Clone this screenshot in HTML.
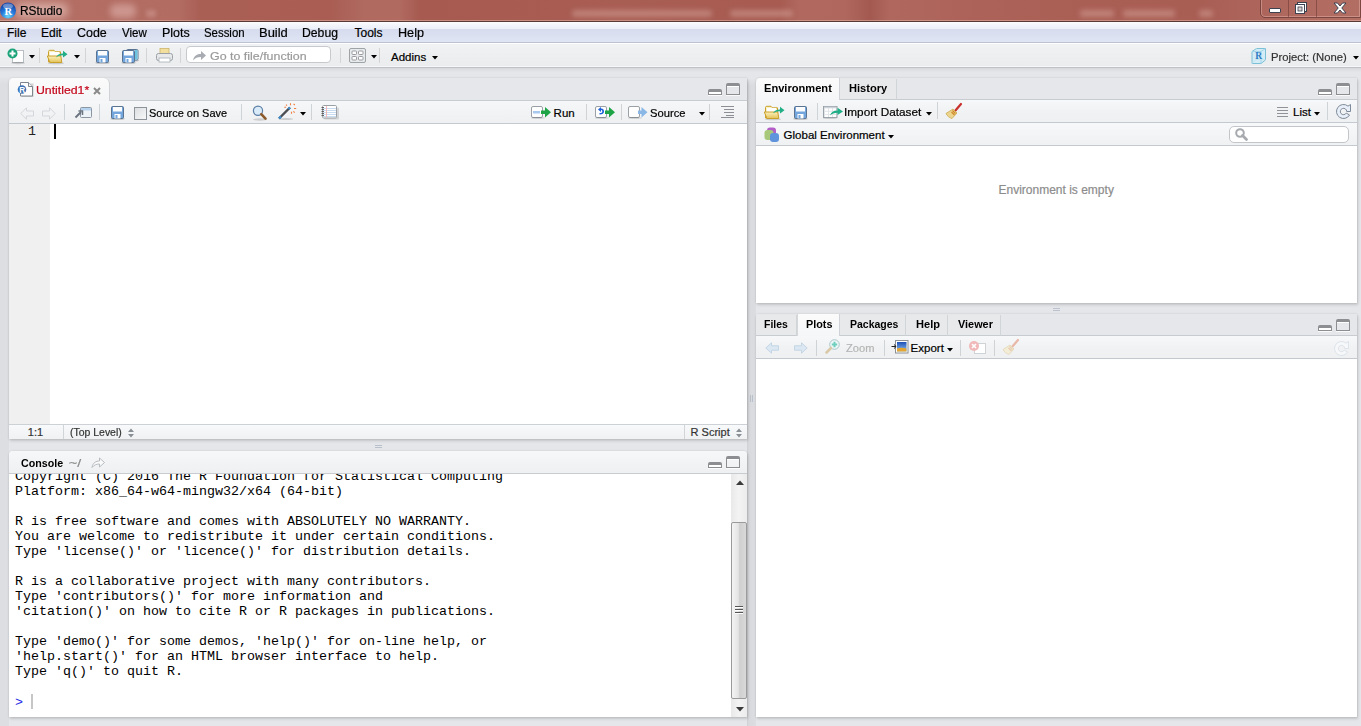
<!DOCTYPE html>
<html><head><meta charset="utf-8"><title>RStudio</title>
<style>
*{margin:0;padding:0;box-sizing:border-box}
html,body{width:1361px;height:726px;overflow:hidden;background:#e5e6e9;font-family:"Liberation Sans",sans-serif;position:relative}
.a{position:absolute}
svg.a{overflow:visible}
.t{position:absolute;white-space:pre;transform-origin:0 0}
.r{-webkit-text-stroke:0.2px currentColor}
</style></head><body>
<div class="a" style="left:0px;top:0px;width:1361px;height:22px;background:linear-gradient(90deg,#b8776d 0px,#b46e64 60px,#b26c62 180px,#aa5f55 200px,#a95d53 330px,#b06a60 365px,#b16a60 400px,#a65a50 420px,#a85c52 570px,#a95e54 620px,#a75b51 780px,#b1695f 800px,#b0685e 845px,#a35950 870px,#b0685e 890px,#ad6359 960px,#aa5f55 1080px,#a95e54 1200px,#b06a60 1300px,#b36e64 1361px)"></div>
<div class="a" style="left:0px;top:20px;width:1361px;height:1px;background:rgba(225,175,165,.6)"></div>
<div class="a" style="left:0px;top:21px;width:1361px;height:1px;background:#5a3a35"></div>
<div class="a" style="left:572px;top:10px;width:140px;height:7px;background:rgba(222,178,170,.42);filter:blur(2.5px);border-radius:3px"></div>
<div class="a" style="left:730px;top:10px;width:63px;height:7px;background:rgba(222,178,170,.42);filter:blur(2.5px);border-radius:3px"></div>
<div class="a" style="left:1080px;top:10px;width:34px;height:7px;background:rgba(222,178,170,.42);filter:blur(2.5px);border-radius:3px"></div>
<div class="a" style="left:1123px;top:10px;width:52px;height:7px;background:rgba(222,178,170,.42);filter:blur(2.5px);border-radius:3px"></div>
<div class="a" style="left:1199px;top:10px;width:14px;height:7px;background:rgba(222,178,170,.42);filter:blur(2.5px);border-radius:3px"></div>
<div class="a" style="left:110px;top:4px;width:26px;height:14px;background:rgba(235,200,195,.45);filter:blur(3px);border-radius:6px"></div>
<div class="a" style="left:146px;top:10px;width:10px;height:7px;background:rgba(235,200,195,.3);filter:blur(2px);border-radius:3px"></div>
<div class="a" style="left:16px;top:3px;width:52px;height:15px;background:rgba(240,215,210,.55);filter:blur(4px);border-radius:6px"></div>
<svg class="a" style="left:0px;top:1px" width="18" height="18" viewBox="0 0 18 18"><defs><radialGradient id="rg" cx="50%" cy="85%" r="75%"><stop offset="0" stop-color="#6fd8f8"/><stop offset=".55" stop-color="#2478dc"/><stop offset="1" stop-color="#1848a8"/></radialGradient></defs><circle cx="8" cy="9.5" r="8" fill="url(#rg)"/><ellipse cx="8" cy="5" rx="5" ry="2.5" fill="rgba(255,255,255,.35)"/><text x="8.3" y="13.6" font-family="Liberation Serif" font-weight="bold" font-size="10.5" fill="#fff" text-anchor="middle">R</text></svg>
<div class="a" style="left:1260px;top:-3px;width:101px;height:21px;border:1px solid rgba(80,40,36,.55);border-radius:0 0 0 5px;box-shadow:inset 0 0 0 1px rgba(255,210,200,.35)"></div>
<div class="a" style="left:1288px;top:0px;width:1px;height:17px;background:rgba(90,45,40,.45)"></div>
<div class="a" style="left:1316px;top:0px;width:1px;height:17px;background:rgba(90,45,40,.45)"></div>
<div class="a" style="left:1269px;top:8px;width:12px;height:5px;background:#fff;border:1px solid #3c4250;border-radius:1px"></div>
<svg class="a" style="left:1294px;top:1px" width="14" height="14" viewBox="0 0 14 14"><rect x="3.5" y="1.5" width="9" height="9" fill="#fff" stroke="#3c4250"/><rect x="1.5" y="3.5" width="9" height="9" fill="#fff" stroke="#3c4250"/><rect x="4" y="6" width="4" height="4" fill="#d9d2d0" stroke="#3c4250" stroke-width="0.8"/></svg>
<svg class="a" style="left:1333px;top:2px" width="14" height="12" viewBox="0 0 14 12"><path d="M1 1H4.5L7 4L9.5 1H13L8.8 6L13 11H9.5L7 8L4.5 11H1L5.2 6Z" fill="#fff" stroke="#3c4250" stroke-width="1" stroke-linejoin="round"/></svg>
<div class="a" style="left:0px;top:22px;width:1361px;height:20px;background:linear-gradient(#fdfdfe 0px,#f3f5fb 3px,#eceff8 6.9px,#d6dcee 7px,#dae0f0 13px,#dfe5f3 20px)"></div>
<div class="a" style="left:0px;top:42px;width:1361px;height:1px;background:#bcc2cf"></div>
<div class="a" style="left:0px;top:43px;width:1361px;height:24px;background:linear-gradient(#f1f2f3,#edeef0 60%,#ebeced)"></div>
<div class="a" style="left:0px;top:43px;width:1361px;height:1px;background:#fff"></div>
<div class="a" style="left:0px;top:66px;width:1361px;height:1px;background:#f6f7f8"></div>
<div class="a" style="left:0px;top:67px;width:1361px;height:1px;background:#bfc1c4"></div>
<div class="a" style="left:0px;top:68px;width:1361px;height:4px;background:linear-gradient(#d8d9dc,#e5e6e9)"></div>
<svg class="a" style="left:7px;top:48px" width="18" height="16" viewBox="0 0 18 16"><rect x="5.5" y="2.5" width="11" height="12" fill="#fff" stroke="#b9bec4"/><ellipse cx="11" cy="15" rx="7" ry="1.2" fill="rgba(0,0,0,.15)"/><circle cx="5.5" cy="5.5" r="5" fill="#1ba37a"/><path d="M5.5 2.5V8.5M2.5 5.5H8.5" stroke="#fff" stroke-width="2"/></svg>
<svg class="a" style="left:29px;top:55px" width="6" height="4" viewBox="0 0 6 4"><path d="M0 0H6L3 3.5Z" fill="#000"/></svg>
<div class="a" style="left:39px;top:48px;width:1px;height:15px;background:#d4d4d4"></div>
<svg class="a" style="left:46px;top:49px" width="22" height="15" viewBox="0 0 22 15"><defs><linearGradient id="fg" x1="0" y1="0" x2="0" y2="1"><stop offset="0" stop-color="#fdf2bd"/><stop offset="1" stop-color="#e3c158"/></linearGradient></defs><ellipse cx="10" cy="14.2" rx="8" ry="1" fill="rgba(0,0,0,.15)"/><path d="M2.5 13V2.5C2.5 1.8 3 1.3 3.7 1.3H8L9.5 2.8H14.5V13Z" fill="#fbf0c0" stroke="#c9a02a"/><rect x="4" y="3" width="9" height="4.5" fill="#fff"/><path d="M1.3 7H14.8L15.8 13.5H4Z" fill="url(#fg)" stroke="#c9a02a" stroke-linejoin="round"/><path d="M10 8.5C11 5.8 13.5 4.6 17 4.6V1.8L21.5 5.2L17 8.6V6.3C14 6.3 11.8 7 10 8.5Z" fill="#1fae86"/></svg>
<svg class="a" style="left:74px;top:55px" width="6" height="4" viewBox="0 0 6 4"><path d="M0 0H6L3 3.5Z" fill="#000"/></svg>
<div class="a" style="left:85px;top:48px;width:1px;height:15px;background:#d4d4d4"></div>
<svg class="a" style="left:96px;top:50px" width="13" height="13" viewBox="0 0 13 13"><ellipse cx="6.5" cy="12.8" rx="7.5" ry="1.2" fill="rgba(0,0,0,.18)"/><rect x="0.5" y="0.5" width="12" height="12" rx="1.2" fill="#72a6dc" stroke="#5a7391"/><rect x="2" y="1" width="9" height="4.5" fill="#fbfcfd"/><rect x="3.5" y="8" width="6" height="4.5" fill="#fff"/><rect x="4.5" y="9" width="2" height="3.5" fill="#72a6dc"/></svg>
<svg class="a" style="left:122px;top:49px" width="17" height="14" viewBox="0 0 17 14"><ellipse cx="12" cy="11.5" rx="5" ry="1" fill="rgba(0,0,0,.18)"/><rect x="4.5" y="0.5" width="11.5" height="10.5" rx="1.2" fill="#fff" stroke="#5a7391"/><rect x="12.5" y="1" width="3" height="9.5" fill="#6cc4e0"/><g transform="translate(0,1)"><ellipse cx="6.5" cy="12.8" rx="7.5" ry="1.2" fill="rgba(0,0,0,.18)"/><rect x="0.5" y="0.5" width="12" height="12" rx="1.2" fill="#72a6dc" stroke="#5a7391"/><rect x="2" y="1" width="9" height="4.5" fill="#fbfcfd"/><rect x="3.5" y="8" width="6" height="4.5" fill="#fff"/><rect x="4.5" y="9" width="2" height="3.5" fill="#72a6dc"/></g></svg>
<div class="a" style="left:146px;top:48px;width:1px;height:15px;background:#d4d4d4"></div>
<svg class="a" style="left:156px;top:48px" width="17" height="15" viewBox="0 0 17 15"><rect x="4" y="0.5" width="9" height="6" fill="#f2df9e" stroke="#cdb46a" stroke-width=".8"/><rect x="0.5" y="5.5" width="16" height="7" rx="2" fill="#e6e8ea" stroke="#9aa0a6"/><rect x="3" y="10" width="11" height="4" fill="#fff" stroke="#a8aeb4" stroke-width=".8"/></svg>
<div class="a" style="left:180px;top:48px;width:1px;height:15px;background:#d4d4d4"></div>
<div class="a" style="left:186px;top:46px;width:145px;height:17px;background:#fff;border:1px solid #c7c9cc;border-radius:4px"></div>
<svg class="a" style="left:192px;top:50px" width="15" height="11" viewBox="0 0 15 11"><path d="M1 10.5C2 5.5 5 4 9 4V1L14 5.5L9 10V7C5.5 7 3 8 1 10.5Z" fill="#a8acb2"/></svg>
<div class="a" style="left:340px;top:48px;width:1px;height:15px;background:#d4d4d4"></div>
<svg class="a" style="left:349px;top:48px" width="17" height="15" viewBox="0 0 17 15"><rect x="0.5" y="0.5" width="16" height="14" rx="1.5" fill="#e9eaec" stroke="#9ea3a8"/><rect x="3" y="3" width="4.5" height="3.5" rx=".8" fill="#fff" stroke="#8d9297" stroke-width=".9"/><rect x="9.5" y="3" width="4.5" height="3.5" rx=".8" fill="#fff" stroke="#8d9297" stroke-width=".9"/><rect x="3" y="8.5" width="4.5" height="3.5" rx=".8" fill="#fff" stroke="#8d9297" stroke-width=".9"/><rect x="9.5" y="8.5" width="4.5" height="3.5" rx=".8" fill="#fff" stroke="#8d9297" stroke-width=".9"/></svg>
<svg class="a" style="left:371px;top:55px" width="6" height="4" viewBox="0 0 6 4"><path d="M0 0H6L3 3.5Z" fill="#000"/></svg>
<div class="a" style="left:379px;top:48px;width:1px;height:15px;background:#d4d4d4"></div>
<svg class="a" style="left:432px;top:56px" width="6" height="4" viewBox="0 0 6 4"><path d="M0 0H6L3 3.5Z" fill="#000"/></svg>
<svg class="a" style="left:1250px;top:47px" width="17" height="18" viewBox="0 0 17 18"><path d="M2 4.5L6.5 1.5H15.5V13L11 16.5H2Z" fill="#d4ecf6" stroke="#7cc0d8" stroke-linejoin="round"/><path d="M2 4.5H11V16.5M11 4.5L15.5 1.5" fill="none" stroke="#9fd3e6" stroke-width=".9"/><path d="M2 16.5L6.5 12.5H15.5M6.5 1.5V12.5" fill="none" stroke="#bfe2ee" stroke-width=".7"/><text x="8.6" y="12" font-family="Liberation Serif" font-weight="bold" font-size="9.5" fill="#2f7cc4" text-anchor="middle">R</text></svg>
<svg class="a" style="left:1353px;top:56px" width="6" height="4" viewBox="0 0 6 4"><path d="M0 0H6L3 3.5Z" fill="#000"/></svg>
<div class="a" style="left:0px;top:76px;width:9px;height:650px;background:linear-gradient(#e5e6e9,#dddee1 8px,#dddee1)"></div>
<div class="a" style="left:747px;top:78px;width:9px;height:648px;background:linear-gradient(90deg,#cfd0d3 0,#d9dadd 2px,#dcdde0 100%)"></div>
<div class="a" style="left:747px;top:78px;width:9px;height:8px;background:linear-gradient(#e5e6e9,rgba(229,230,233,0))"></div>
<div class="a" style="left:750px;top:395px;width:1px;height:7px;background:#b8c0cc"></div>
<div class="a" style="left:752px;top:395px;width:1px;height:7px;background:#b8c0cc"></div>
<div class="a" style="left:9px;top:78px;width:738px;height:361px;background:#fff;border-radius:4px 0 0 0;box-shadow:0 0 2px rgba(0,0,0,.16),1px 2px 3px rgba(0,0,0,.14)"></div>
<div class="a" style="left:9px;top:78px;width:738px;height:22px;background:#e6e7ea;border-radius:4px 0 0 0"></div>
<div class="a" style="left:9px;top:100px;width:738px;height:1px;background:#c8ccd0"></div>
<div class="a" style="left:9px;top:78px;width:101px;height:23px;background:linear-gradient(#fbfbfc,#f4f5f6);border-radius:5px 6px 0 0;border-right:1px solid #cfd2d6"></div>
<div class="a" style="left:9px;top:101px;width:738px;height:22px;background:linear-gradient(#f6f7f8,#f2f3f4 50%,#eef0f1)"></div>
<div class="a" style="left:9px;top:123px;width:738px;height:1px;background:#c3c9ce"></div>
<div class="a" style="left:9px;top:124px;width:41px;height:300px;background:#f0f0f0"></div>
<div class="a" style="left:54px;top:124px;width:2px;height:15px;background:#000"></div>
<div class="a" style="left:9px;top:424px;width:738px;height:1px;background:#cdd1d5"></div>
<div class="a" style="left:9px;top:425px;width:738px;height:14px;background:linear-gradient(#f8f9fa,#eff1f2)"></div>
<div class="a" style="left:63px;top:425px;width:1px;height:14px;background:#d2d5d8"></div>
<div class="a" style="left:684px;top:425px;width:1px;height:14px;background:#d2d5d8"></div>
<svg class="a" style="left:128px;top:428px" width="6" height="10" viewBox="0 0 6 10"><path d="M0 4L3 0.5L6 4Z M0 6L3 9.5L6 6Z" fill="#8a8f95"/></svg>
<svg class="a" style="left:736px;top:428px" width="6" height="10" viewBox="0 0 6 10"><path d="M0 4L3 0.5L6 4Z M0 6L3 9.5L6 6Z" fill="#8a8f95"/></svg>
<div class="a" style="left:708px;top:89px;width:14px;height:6px;border:1px solid #8c8e91;border-top:3px solid #8c8e91;background:#fff;border-radius:2px 2px 0 0"></div><div class="a" style="left:708px;top:95px;width:14px;height:1px;background:rgba(255,255,255,.8)"></div><div class="a" style="left:726px;top:83px;width:14px;height:12px;border:1px solid #8c8e91;border-top:3px solid #8c8e91;border-radius:2px 2px 0 0;box-shadow:inset 0 1px 0 #fff"></div><div class="a" style="left:726px;top:95px;width:14px;height:1px;background:rgba(255,255,255,.8)"></div>
<svg class="a" style="left:17px;top:82px" width="17" height="15" viewBox="0 0 17 15"><rect x="4.5" y="1.5" width="12" height="13.5" fill="rgba(0,0,0,.15)"/><path d="M3.5 0.5H11.5L15.5 4.5V14H3.5Z" fill="#fff" stroke="#7e858c"/><path d="M11.5 0.5V4.5H15.5" fill="#f2f2f2" stroke="#7e858c"/><circle cx="5" cy="7.5" r="4.3" fill="#3d72b4"/><text x="5.1" y="10.6" font-family="Liberation Sans" font-weight="bold" font-size="8.2" fill="#fff" text-anchor="middle">R</text></svg>
<svg class="a" style="left:93px;top:87px" width="8" height="8" viewBox="0 0 8 8"><path d="M1 1L7 7M7 1L1 7" stroke="#8a8a8a" stroke-width="2"/></svg>
<svg class="a" style="left:20px;top:107px" width="14" height="13" viewBox="0 0 14 13"><path d="M0.8 6.5L6.5 0.8V4H13.5V9H6.5V12.2Z" fill="none" stroke="#d3d6da"/></svg>
<svg class="a" style="left:42px;top:107px" width="14" height="13" viewBox="0 0 14 13"><path d="M13.2 6.5L7.5 0.8V4H0.5V9H7.5V12.2Z" fill="none" stroke="#d3d6da"/></svg>
<div class="a" style="left:64px;top:104px;width:1px;height:16px;background:#d0d3d6"></div>
<svg class="a" style="left:74px;top:105px" width="19" height="14" viewBox="0 0 19 14"><rect x="6.5" y="2.5" width="11" height="10" rx="1" fill="#eef3f8" stroke="#8b96a2"/><rect x="7" y="3" width="10" height="2.5" fill="#b6d3ef"/><path d="M1.5 12.5L7 7" stroke="#6b7480" stroke-width="2"/><path d="M4.5 6H8.5V10" stroke="#6b7480" stroke-width="1.5" fill="none"/></svg>
<div class="a" style="left:99px;top:104px;width:1px;height:16px;background:#d0d3d6"></div>
<svg class="a" style="left:111px;top:106px" width="13" height="13" viewBox="0 0 13 13"><ellipse cx="6.5" cy="12.8" rx="7.5" ry="1.2" fill="rgba(0,0,0,.18)"/><rect x="0.5" y="0.5" width="12" height="12" rx="1.2" fill="#72a6dc" stroke="#5a7391"/><rect x="2" y="1" width="9" height="4.5" fill="#fbfcfd"/><rect x="3.5" y="8" width="6" height="4.5" fill="#fff"/><rect x="4.5" y="9" width="2" height="3.5" fill="#72a6dc"/></svg>
<div class="a" style="left:134px;top:107px;width:13px;height:13px;border:1px solid #8e9399;background:linear-gradient(135deg,#dcdee0,#f8f8f8)"></div>
<div class="a" style="left:241px;top:104px;width:1px;height:16px;background:#d0d3d6"></div>
<svg class="a" style="left:251px;top:104px" width="17" height="17" viewBox="0 0 17 17"><ellipse cx="9" cy="15.5" rx="7" ry="1.2" fill="rgba(0,0,0,.15)"/><circle cx="7" cy="6.7" r="4.6" fill="#d9eaf8" stroke="#5b7ea5" stroke-width="1.2"/><path d="M10.3 10.2L14.5 14.6" stroke="#8b5a2b" stroke-width="2.6" stroke-linecap="round"/></svg>
<svg class="a" style="left:276px;top:103px" width="22" height="17" viewBox="0 0 22 17"><ellipse cx="10" cy="16" rx="7" ry="1" fill="rgba(0,0,0,.15)"/><path d="M3 15.5L14 4.5" stroke="#4a4d52" stroke-width="2.4"/><path d="M3 15.5L5 13.5M12.5 6L14 4.5" stroke="#3d8fd0" stroke-width="2.4"/><path d="M10 1.6L11 2.6M14.5 0.3V2.3M17.6 0.8L18.8 2M8.3 4.2H10.1M18 5.5H20.2M15.5 8.8V10.8M17.4 8.4L18.6 9.6" stroke="#f47c3c" stroke-width="1.1"/></svg>
<svg class="a" style="left:300px;top:112px" width="6" height="4" viewBox="0 0 6 4"><path d="M0 0H6L3 3.5Z" fill="#000"/></svg>
<div class="a" style="left:311px;top:104px;width:1px;height:16px;background:#d0d3d6"></div>
<svg class="a" style="left:321px;top:105px" width="19" height="15" viewBox="0 0 19 15"><rect x="3" y="2.5" width="15" height="12" rx="1" fill="rgba(0,0,0,.12)"/><rect x="1.5" y="0.5" width="14" height="12.5" rx="1.2" fill="#fff" stroke="#9aa0a6"/><path d="M2 3.5H15M2 5.5H15M2 7.5H15M2 9.5H15M2 11.5H15" stroke="#b9d2ee" stroke-width=".8"/><path d="M5.5 1V12.5" stroke="#f2a8a8" stroke-width=".8"/><path d="M0.5 2.5H3M0.5 4.5H3M0.5 6.5H3M0.5 8.5H3M0.5 10.5H3" stroke="#555" stroke-width=".9"/></svg>
<svg class="a" style="left:531px;top:105px" width="21" height="15" viewBox="0 0 21 15"><rect x="0.5" y="1.5" width="11" height="11" rx="1.5" fill="#fff" stroke="#9aa0a6"/><ellipse cx="7" cy="13" rx="7" ry="1" fill="rgba(0,0,0,.12)"/><rect x="2" y="6" width="7" height="2.5" fill="#a8c8ee"/><path d="M10 5.5H14V2L20 7.2L14 12.5V9H10Z" fill="#1ea446"/></svg>
<div class="a" style="left:586px;top:104px;width:1px;height:16px;background:#d0d3d6"></div>
<svg class="a" style="left:595px;top:105px" width="21" height="15" viewBox="0 0 21 15"><rect x="0.5" y="1.5" width="11" height="11" rx="1.5" fill="#fff" stroke="#9aa0a6"/><ellipse cx="7" cy="13" rx="7" ry="1" fill="rgba(0,0,0,.12)"/><path d="M3 4.5L6 2V3.5C8.5 3.5 9 5 9 6.5C9 8.5 7.5 9.5 4.5 9.5V8C6.5 8 7.3 7.5 7.3 6.5C7.3 5.5 6.8 5 6 5V7Z" fill="#1d60d8"/><path d="M10 5.5H14V2L20 7.2L14 12.5V9H10Z" fill="#1ea446"/></svg>
<div class="a" style="left:621px;top:104px;width:1px;height:16px;background:#d0d3d6"></div>
<svg class="a" style="left:628px;top:105px" width="20" height="15" viewBox="0 0 20 15"><rect x="0.5" y="1.5" width="11" height="11" rx="1.5" fill="#fff" stroke="#9aa0a6"/><ellipse cx="7" cy="13" rx="7" ry="1" fill="rgba(0,0,0,.12)"/><path d="M10 5.5H13.5V2L19.5 7.2L13.5 12.5V9H10Z" fill="#8ab8e6"/></svg>
<svg class="a" style="left:699px;top:112px" width="6" height="4" viewBox="0 0 6 4"><path d="M0 0H6L3 3.5Z" fill="#000"/></svg>
<div class="a" style="left:709px;top:104px;width:1px;height:16px;background:#d0d3d6"></div>
<svg class="a" style="left:721px;top:106px" width="13" height="12" viewBox="0 0 13 12"><path d="M0 0.5H13M3 3.5H13M3 6.5H13M5 9.5H13M0 11.5H13" stroke="#8c9096" stroke-width="1"/></svg>
<div class="a" style="left:9px;top:451px;width:738px;height:266px;background:#fff;border-radius:4px 4px 0 0;box-shadow:0 0 2px rgba(0,0,0,.16),1px 2px 3px rgba(0,0,0,.14)"></div>
<div class="a" style="left:9px;top:451px;width:738px;height:22px;background:linear-gradient(#f6f7f8,#eef0f1);border-radius:4px 4px 0 0"></div>
<div class="a" style="left:9px;top:473px;width:738px;height:1px;background:#c8ccd0"></div>
<svg class="a" style="left:91px;top:457px" width="14" height="11" viewBox="0 0 14 11"><path d="M1 10.5C2 5.5 5 4 8.5 4V1L13.5 5.5L8.5 10V7C5.5 7 3 8 1 10.5Z" fill="#fafafa" stroke="#b8bcc0"/></svg>
<div class="a" style="left:708px;top:462px;width:14px;height:6px;border:1px solid #8c8e91;border-top:3px solid #8c8e91;background:#fff;border-radius:2px 2px 0 0"></div><div class="a" style="left:708px;top:468px;width:14px;height:1px;background:rgba(255,255,255,.8)"></div><div class="a" style="left:726px;top:456px;width:14px;height:12px;border:1px solid #8c8e91;border-top:3px solid #8c8e91;border-radius:2px 2px 0 0;box-shadow:inset 0 1px 0 #fff"></div><div class="a" style="left:726px;top:468px;width:14px;height:1px;background:rgba(255,255,255,.8)"></div>
<div class="a" style="left:731px;top:474px;width:16px;height:243px;background:linear-gradient(90deg,#e9e9e9,#f3f3f3 50%,#ececec)"></div>
<svg class="a" style="left:736px;top:480px" width="8" height="5" viewBox="0 0 8 5"><path d="M0 5L4 0.5L8 5Z" fill="#3a3a3a"/></svg>
<svg class="a" style="left:736px;top:707px" width="8" height="5" viewBox="0 0 8 5"><path d="M0 0L4 4.5L8 0Z" fill="#3a3a3a"/></svg>
<div class="a" style="left:731px;top:522px;width:16px;height:177px;border:1px solid #9a9a9a;border-radius:2px;background:linear-gradient(90deg,#f4f4f4,#e4e4e4 45%,#cfcfcf 55%,#dadada)"></div>
<svg class="a" style="left:735px;top:606px" width="8" height="9" viewBox="0 0 8 9"><path d="M0 0.5H8M0 3.5H8M0 6.5H8" stroke="#555" stroke-width="1"/><path d="M0 1.5H8M0 4.5H8M0 7.5H8" stroke="#fff" stroke-width="1"/></svg>
<div class="a" style="left:756px;top:78px;width:601px;height:225px;background:#fff;border-radius:3px 0 0 0;box-shadow:0 0 2px rgba(0,0,0,.16),1px 2px 3px rgba(0,0,0,.14)"></div>
<div class="a" style="left:756px;top:78px;width:601px;height:21px;background:#e6e7ea;border-radius:3px 0 0 0"></div>
<div class="a" style="left:756px;top:99px;width:601px;height:1px;background:#c8ccd0"></div>
<div class="a" style="left:756px;top:78px;width:84px;height:22px;background:linear-gradient(#fbfbfc,#f5f6f7);border-radius:5px 0 0 0;border-right:1px solid #cfd2d6"></div>
<div class="a" style="left:840px;top:79px;width:57px;height:21px;background:#e8e9eb;border-right:1px solid #d2d5d8;border-bottom:1px solid #c8ccd0"></div>
<div class="a" style="left:756px;top:100px;width:601px;height:22px;background:linear-gradient(#f7f8f9,#f1f2f3 50%,#eef0f1)"></div>
<div class="a" style="left:756px;top:122px;width:601px;height:1px;background:#c3c9ce"></div>
<div class="a" style="left:756px;top:123px;width:601px;height:22px;background:linear-gradient(#f7f8f9,#eff1f2)"></div>
<div class="a" style="left:756px;top:145px;width:601px;height:1px;background:#c3c9ce"></div>
<div class="a" style="left:1318px;top:89px;width:14px;height:6px;border:1px solid #8c8e91;border-top:3px solid #8c8e91;background:#fff;border-radius:2px 2px 0 0"></div><div class="a" style="left:1318px;top:95px;width:14px;height:1px;background:rgba(255,255,255,.8)"></div><div class="a" style="left:1336px;top:83px;width:14px;height:12px;border:1px solid #8c8e91;border-top:3px solid #8c8e91;border-radius:2px 2px 0 0;box-shadow:inset 0 1px 0 #fff"></div><div class="a" style="left:1336px;top:95px;width:14px;height:1px;background:rgba(255,255,255,.8)"></div>
<svg class="a" style="left:763px;top:105px" width="22" height="15" viewBox="0 0 22 15"><defs><linearGradient id="fg2" x1="0" y1="0" x2="0" y2="1"><stop offset="0" stop-color="#fdf2bd"/><stop offset="1" stop-color="#e3c158"/></linearGradient></defs><ellipse cx="10" cy="14.2" rx="8" ry="1" fill="rgba(0,0,0,.15)"/><path d="M2.5 13V2.5C2.5 1.8 3 1.3 3.7 1.3H8L9.5 2.8H14.5V13Z" fill="#fbf0c0" stroke="#c9a02a"/><rect x="4" y="3" width="9" height="4.5" fill="#fff"/><path d="M1.3 7H14.8L15.8 13.5H4Z" fill="url(#fg2)" stroke="#c9a02a" stroke-linejoin="round"/><path d="M10 8.5C11 5.8 13.5 4.6 17 4.6V1.8L21.5 5.2L17 8.6V6.3C14 6.3 11.8 7 10 8.5Z" fill="#1fae86"/></svg>
<svg class="a" style="left:794px;top:106px" width="13" height="13" viewBox="0 0 13 13"><ellipse cx="6.5" cy="12.8" rx="7.5" ry="1.2" fill="rgba(0,0,0,.18)"/><rect x="0.5" y="0.5" width="12" height="12" rx="1.2" fill="#72a6dc" stroke="#5a7391"/><rect x="2" y="1" width="9" height="4.5" fill="#fbfcfd"/><rect x="3.5" y="8" width="6" height="4.5" fill="#fff"/><rect x="4.5" y="9" width="2" height="3.5" fill="#72a6dc"/></svg>
<div class="a" style="left:817px;top:103px;width:1px;height:17px;background:#d0d3d6"></div>
<svg class="a" style="left:822px;top:104px" width="22" height="16" viewBox="0 0 22 16"><ellipse cx="8" cy="14" rx="7" ry="1" fill="rgba(0,0,0,.15)"/><rect x="1.5" y="2.5" width="13.5" height="11" fill="#e2e5e8" stroke="#9aa2aa"/><path d="M2 3H14.5" stroke="#b8c0c8" stroke-width="1"/><g fill="#fff"><rect x="3" y="4.5" width="3" height="2.3"/><rect x="7" y="4.5" width="3" height="2.3"/><rect x="11" y="4.5" width="3" height="2.3"/><rect x="3" y="7.8" width="3" height="2.3"/><rect x="7" y="7.8" width="3" height="2.3"/><rect x="11" y="7.8" width="3" height="2.3"/><rect x="3" y="11" width="3" height="2"/><rect x="7" y="11" width="3" height="2"/><rect x="11" y="11" width="3" height="2"/></g><path d="M8 11.5C9 8.5 11.5 6.6 15.5 6.6V3.8L21 7.4L15.5 11V8.7C12.5 8.7 10 9.6 8 11.5Z" fill="#1fae86"/></svg>
<svg class="a" style="left:926px;top:112px" width="6" height="4" viewBox="0 0 6 4"><path d="M0 0H6L3 3.5Z" fill="#000"/></svg>
<div class="a" style="left:937px;top:102px;width:1px;height:17px;background:#d0d3d6"></div>
<svg class="a" style="left:945px;top:103px" width="18" height="17" viewBox="0 0 18 17"><path d="M16 1L10 8" stroke="#c9302c" stroke-width="2.2" stroke-linecap="round"/><path d="M8 6L12 10L7 15.5C5 15 2 13 1 10.5Z" fill="#ecd58e" stroke="#caa84e" stroke-width=".8"/><path d="M7.5 7.5L10.5 10.5M6.5 9L9.5 12" stroke="#d18a2a" stroke-width="1.2"/></svg>
<svg class="a" style="left:1277px;top:107px" width="11" height="11" viewBox="0 0 11 11"><path d="M0 0.5H11M0 3.5H11M0 6.5H11M0 9.5H11" stroke="#8f9398" stroke-width="1"/></svg>
<svg class="a" style="left:1314px;top:112px" width="6" height="4" viewBox="0 0 6 4"><path d="M0 0H6L3 3.5Z" fill="#000"/></svg>
<div class="a" style="left:1327px;top:102px;width:1px;height:18px;background:#d0d3d6"></div>
<svg class="a" style="left:1336px;top:104px" width="16" height="16" viewBox="0 0 16 16"><path d="M13.56 11A7 7 0 1 1 12 2.14L14.5 0.5V7.5H10.7A3.2 3.2 0 1 0 10.27 9.1Z" fill="#e8eff8" stroke="#7d8a99" stroke-width="1" stroke-linejoin="round"/></svg>
<svg class="a" style="left:764px;top:127px" width="16" height="15" viewBox="0 0 16 15"><rect x="3" y="0.5" width="9" height="9" rx="3" fill="#b35dc8"/><rect x="0.5" y="3" width="9" height="10" rx="3" fill="#a9c97a"/><rect x="6" y="6" width="9" height="9" rx="3" fill="#5f94dc"/></svg>
<svg class="a" style="left:888px;top:135px" width="6" height="4" viewBox="0 0 6 4"><path d="M0 0H6L3 3.5Z" fill="#000"/></svg>
<div class="a" style="left:1229px;top:126px;width:120px;height:17px;background:#fff;border:1px solid #c3c6c9;border-radius:5px"></div>
<svg class="a" style="left:1235px;top:128px" width="13" height="13" viewBox="0 0 13 13"><circle cx="5" cy="5" r="3.8" fill="none" stroke="#a6aaae" stroke-width="2"/><path d="M7.5 7.5L11.5 11.5" stroke="#a6aaae" stroke-width="2.8" stroke-linecap="round"/></svg>
<div class="a" style="left:1053px;top:308px;width:7px;height:1px;background:#bcc3ce"></div>
<div class="a" style="left:1053px;top:310px;width:7px;height:1px;background:#bcc3ce"></div>
<div class="a" style="left:756px;top:314px;width:601px;height:403px;background:#fff;border-radius:3px 0 0 0;box-shadow:0 0 2px rgba(0,0,0,.16),1px 2px 3px rgba(0,0,0,.14)"></div>
<div class="a" style="left:756px;top:314px;width:601px;height:21px;background:#e6e7ea;border-radius:3px 0 0 0"></div>
<div class="a" style="left:756px;top:335px;width:601px;height:1px;background:#c8ccd0"></div>
<div class="a" style="left:756px;top:315px;width:41px;height:21px;background:#e8e9eb;border-right:1px solid #d2d5d8;border-bottom:1px solid #c8ccd0;border-radius:4px 0 0 0"></div>
<div class="a" style="left:797px;top:314px;width:43px;height:22px;background:linear-gradient(#fbfbfc,#f5f6f7);border-right:1px solid #cfd2d6;border-left:1px solid #d5d8db"></div>
<div class="a" style="left:840px;top:315px;width:66px;height:21px;background:#e8e9eb;border-right:1px solid #d2d5d8;border-bottom:1px solid #c8ccd0"></div>
<div class="a" style="left:906px;top:315px;width:42px;height:21px;background:#e8e9eb;border-right:1px solid #d2d5d8;border-bottom:1px solid #c8ccd0"></div>
<div class="a" style="left:948px;top:315px;width:53px;height:21px;background:#e8e9eb;border-right:1px solid #d2d5d8;border-bottom:1px solid #c8ccd0"></div>
<div class="a" style="left:756px;top:336px;width:601px;height:22px;background:linear-gradient(#f7f8f9,#f1f2f3 50%,#eef0f1)"></div>
<div class="a" style="left:756px;top:358px;width:601px;height:1px;background:#c3c9ce"></div>
<div class="a" style="left:1318px;top:325px;width:14px;height:6px;border:1px solid #8c8e91;border-top:3px solid #8c8e91;background:#fff;border-radius:2px 2px 0 0"></div><div class="a" style="left:1318px;top:331px;width:14px;height:1px;background:rgba(255,255,255,.8)"></div><div class="a" style="left:1336px;top:319px;width:14px;height:12px;border:1px solid #8c8e91;border-top:3px solid #8c8e91;border-radius:2px 2px 0 0;box-shadow:inset 0 1px 0 #fff"></div><div class="a" style="left:1336px;top:331px;width:14px;height:1px;background:rgba(255,255,255,.8)"></div>
<svg class="a" style="left:765px;top:342px" width="14" height="12" viewBox="0 0 14 12"><path d="M0.8 6L6.5 0.8V3.8H13.5V8.2H6.5V11.2Z" fill="#dbe8f3" stroke="#c4d5e4"/></svg>
<svg class="a" style="left:794px;top:342px" width="14" height="12" viewBox="0 0 14 12"><path d="M13.2 6L7.5 0.8V3.8H0.5V8.2H7.5V11.2Z" fill="#dbe8f3" stroke="#c4d5e4"/></svg>
<div class="a" style="left:816px;top:340px;width:1px;height:16px;background:#d0d3d6"></div>
<svg class="a" style="left:825px;top:339px" width="15" height="15" viewBox="0 0 15 15"><circle cx="9.5" cy="5.5" r="4.8" fill="#eef6f6" stroke="#a9c8cc"/><path d="M9.5 2.8V8.2M6.8 5.5H12.2" stroke="#6fcfbf" stroke-width="2"/><path d="M6 9L1.5 13.5" stroke="#d9c9a9" stroke-width="2.6" stroke-linecap="round"/></svg>
<div class="a" style="left:884px;top:340px;width:1px;height:16px;background:#d0d3d6"></div>
<svg class="a" style="left:891px;top:340px" width="18" height="14" viewBox="0 0 18 14"><defs><linearGradient id="sky" x1="0" y1="0" x2="0" y2="1"><stop offset="0" stop-color="#1d4fb8"/><stop offset="1" stop-color="#8fc3ef"/></linearGradient></defs><rect x="4.5" y="0.5" width="12.5" height="12.5" fill="#fff" stroke="#8a9096"/><rect x="6" y="2" width="9.5" height="9.5" fill="url(#sky)"/><path d="M6 8.5C9 7.5 12 7.8 15.5 8.5V11.5H6Z" fill="#e5a532"/><path d="M0.5 6.5H5M3 4.5L5.2 6.5L3 8.5" stroke="#222" stroke-width="1" fill="none"/></svg>
<svg class="a" style="left:947px;top:348px" width="6" height="4" viewBox="0 0 6 4"><path d="M0 0H6L3 3.5Z" fill="#000"/></svg>
<div class="a" style="left:960px;top:340px;width:1px;height:16px;background:#d0d3d6"></div>
<svg class="a" style="left:968px;top:340px" width="19" height="15" viewBox="0 0 19 15"><rect x="6.5" y="3.5" width="11" height="10" fill="#fff" stroke="#d0d3d6"/><circle cx="6" cy="6" r="5" fill="#f0b8b8"/><path d="M4 4L8 8M8 4L4 8" stroke="#fff" stroke-width="1.6"/></svg>
<div class="a" style="left:994px;top:340px;width:1px;height:16px;background:#d0d3d6"></div>
<svg class="a" style="left:1002px;top:339px" width="18" height="17" viewBox="0 0 18 17"><path d="M16 1L10 8" stroke="#e8b8a8" stroke-width="2.2" stroke-linecap="round"/><path d="M8 6L12 10L7 15.5C5 15 2 13 1 10.5Z" fill="#f3ecd6" stroke="#e2d6b6" stroke-width=".8"/><path d="M7.5 7.5L10.5 10.5M6.5 9L9.5 12" stroke="#e6ccb0" stroke-width="1.2"/></svg>
<svg class="a" style="left:1334px;top:341px" width="16" height="16" viewBox="0 0 16 16"><path d="M13.56 11A7 7 0 1 1 12 2.14L14.5 0.5V7.5H10.7A3.2 3.2 0 1 0 10.27 9.1Z" fill="#f6f8fa" stroke="#dde3ea" stroke-width="1" stroke-linejoin="round"/></svg>
<div class="a" style="left:375px;top:445px;width:7px;height:1px;background:#b8c0cc"></div>
<div class="a" style="left:375px;top:447px;width:7px;height:1px;background:#b8c0cc"></div>
<div class="a" style="left:9px;top:474px;width:722px;height:243px;overflow:hidden"><div class="a" style="left:-9px;top:-474px;width:1361px;height:726px"><div class="t" style="left:15px;top:469.8px;font-family:'Liberation Mono';font-size:13.33px;line-height:13.33px;color:#000">Copyright (C) 2016 The R Foundation for Statistical Computing</div>
<div class="t" style="left:15px;top:484.8px;font-family:'Liberation Mono';font-size:13.33px;line-height:13.33px;color:#000">Platform: x86_64-w64-mingw32/x64 (64-bit)</div>
<div class="t" style="left:15px;top:514.8px;font-family:'Liberation Mono';font-size:13.33px;line-height:13.33px;color:#000">R is free software and comes with ABSOLUTELY NO WARRANTY.</div>
<div class="t" style="left:15px;top:529.8px;font-family:'Liberation Mono';font-size:13.33px;line-height:13.33px;color:#000">You are welcome to redistribute it under certain conditions.</div>
<div class="t" style="left:15px;top:544.8px;font-family:'Liberation Mono';font-size:13.33px;line-height:13.33px;color:#000">Type 'license()' or 'licence()' for distribution details.</div>
<div class="t" style="left:15px;top:574.8px;font-family:'Liberation Mono';font-size:13.33px;line-height:13.33px;color:#000">R is a collaborative project with many contributors.</div>
<div class="t" style="left:15px;top:589.8px;font-family:'Liberation Mono';font-size:13.33px;line-height:13.33px;color:#000">Type 'contributors()' for more information and</div>
<div class="t" style="left:15px;top:604.8px;font-family:'Liberation Mono';font-size:13.33px;line-height:13.33px;color:#000">'citation()' on how to cite R or R packages in publications.</div>
<div class="t" style="left:15px;top:634.8px;font-family:'Liberation Mono';font-size:13.33px;line-height:13.33px;color:#000">Type 'demo()' for some demos, 'help()' for on-line help, or</div>
<div class="t" style="left:15px;top:649.8px;font-family:'Liberation Mono';font-size:13.33px;line-height:13.33px;color:#000">'help.start()' for an HTML browser interface to help.</div>
<div class="t" style="left:15px;top:664.8px;font-family:'Liberation Mono';font-size:13.33px;line-height:13.33px;color:#000">Type 'q()' to quit R.</div>
<div class="t" style="left:15px;top:695.8px;font-family:'Liberation Mono';font-size:13.33px;line-height:13.33px;color:#2a2ae8">&gt;</div>
<div class="a" style="left:31px;top:694px;width:2px;height:15px;background:#c6c6c6"></div></div></div>
<div class="t r" style="left:20.0px;top:5.4px;font-size:12.5px;line-height:12.5px;font-weight:400;color:#000;font-family:'Liberation Sans';transform:scaleX(0.953);">RStudio</div>
<div class="t r" style="left:7.0px;top:26.8px;font-size:12px;line-height:12px;font-weight:400;color:#000;font-family:'Liberation Sans';">File</div>
<div class="t r" style="left:41.0px;top:26.8px;font-size:12px;line-height:12px;font-weight:400;color:#000;font-family:'Liberation Sans';">Edit</div>
<div class="t r" style="left:77.0px;top:26.8px;font-size:12px;line-height:12px;font-weight:400;color:#000;font-family:'Liberation Sans';transform:scaleX(1.037);">Code</div>
<div class="t r" style="left:122.0px;top:26.8px;font-size:12px;line-height:12px;font-weight:400;color:#000;font-family:'Liberation Sans';transform:scaleX(0.962);">View</div>
<div class="t r" style="left:162.0px;top:26.8px;font-size:12px;line-height:12px;font-weight:400;color:#000;font-family:'Liberation Sans';transform:scaleX(1.040);">Plots</div>
<div class="t r" style="left:204.0px;top:26.8px;font-size:12px;line-height:12px;font-weight:400;color:#000;font-family:'Liberation Sans';transform:scaleX(0.951);">Session</div>
<div class="t r" style="left:258.9px;top:26.8px;font-size:12px;line-height:12px;font-weight:400;color:#000;font-family:'Liberation Sans';transform:scaleX(1.080);">Build</div>
<div class="t r" style="left:302.0px;top:26.8px;font-size:12px;line-height:12px;font-weight:400;color:#000;font-family:'Liberation Sans';transform:scaleX(1.018);">Debug</div>
<div class="t r" style="left:354.5px;top:26.8px;font-size:12px;line-height:12px;font-weight:400;color:#000;font-family:'Liberation Sans';">Tools</div>
<div class="t r" style="left:398.3px;top:26.8px;font-size:12px;line-height:12px;font-weight:400;color:#000;font-family:'Liberation Sans';transform:scaleX(1.052);">Help</div>
<div class="t r" style="left:209.9px;top:51.3px;font-size:11.5px;line-height:11.5px;font-weight:400;color:#9a9a9a;font-family:'Liberation Sans';transform:scaleX(1.080);">Go to file/function</div>
<div class="t r" style="left:391.0px;top:52.3px;font-size:11.5px;line-height:11.5px;font-weight:400;color:#000;font-family:'Liberation Sans';">Addins</div>
<div class="t r" style="left:1270.5px;top:52.3px;font-size:11.5px;line-height:11.5px;font-weight:400;color:#333;font-family:'Liberation Sans';transform:scaleX(0.980);">Project: (None)</div>
<div class="t r" style="left:36.3px;top:85.3px;font-size:11.5px;line-height:11.5px;font-weight:400;color:#c4081c;font-family:'Liberation Sans';transform:scaleX(1.067);">Untitled1*</div>
<div class="t r" style="left:149.3px;top:108.3px;font-size:11.5px;line-height:11.5px;font-weight:400;color:#000;font-family:'Liberation Sans';transform:scaleX(0.954);">Source on Save</div>
<div class="t r" style="left:553.6px;top:108.3px;font-size:11.5px;line-height:11.5px;font-weight:400;color:#000;font-family:'Liberation Sans';">Run</div>
<div class="t r" style="left:650.4px;top:108.3px;font-size:11.5px;line-height:11.5px;font-weight:400;color:#000;font-family:'Liberation Sans';transform:scaleX(0.974);">Source</div>
<div class="t" style="left:28.0px;top:124.8px;font-size:13.33px;line-height:13.33px;font-weight:400;color:#222;font-family:'Liberation Mono';">1</div>
<div class="t r" style="left:27.8px;top:426.7px;font-size:11px;line-height:11px;font-weight:400;color:#333;font-family:'Liberation Sans';">1:1</div>
<div class="t r" style="left:69.6px;top:426.7px;font-size:11px;line-height:11px;font-weight:400;color:#333;font-family:'Liberation Sans';transform:scaleX(0.951);">(Top Level)</div>
<div class="t r" style="left:690.6px;top:426.7px;font-size:11px;line-height:11px;font-weight:400;color:#333;font-family:'Liberation Sans';">R Script</div>
<div class="t" style="left:21.2px;top:458.3px;font-size:11.5px;line-height:11.5px;font-weight:700;color:#000;font-family:'Liberation Sans';transform:scaleX(0.929);">Console</div>
<div class="t r" style="left:68.8px;top:458.3px;font-size:11.5px;line-height:11.5px;font-weight:400;color:#888;font-family:'Liberation Sans';transform:scaleX(1.222);">~/</div>
<div class="t" style="left:764.4px;top:83.3px;font-size:11.5px;line-height:11.5px;font-weight:700;color:#000;font-family:'Liberation Sans';transform:scaleX(0.965);">Environment</div>
<div class="t" style="left:849.4px;top:83.3px;font-size:11.5px;line-height:11.5px;font-weight:700;color:#000;font-family:'Liberation Sans';transform:scaleX(0.964);">History</div>
<div class="t r" style="left:843.8px;top:107.3px;font-size:11.5px;line-height:11.5px;font-weight:400;color:#000;font-family:'Liberation Sans';transform:scaleX(1.024);">Import Dataset</div>
<div class="t r" style="left:783.6px;top:130.3px;font-size:11.5px;line-height:11.5px;font-weight:400;color:#000;font-family:'Liberation Sans';">Global Environment</div>
<div class="t r" style="left:1293.0px;top:107.3px;font-size:11.5px;line-height:11.5px;font-weight:400;color:#000;font-family:'Liberation Sans';">List</div>
<div class="t r" style="left:998.5px;top:183.8px;font-size:12px;line-height:12px;font-weight:400;color:#8c8c8c;font-family:'Liberation Sans';">Environment is empty</div>
<div class="t" style="left:764.4px;top:319.3px;font-size:11.5px;line-height:11.5px;font-weight:700;color:#000;font-family:'Liberation Sans';transform:scaleX(0.908);">Files</div>
<div class="t" style="left:805.7px;top:319.3px;font-size:11.5px;line-height:11.5px;font-weight:700;color:#000;font-family:'Liberation Sans';transform:scaleX(0.941);">Plots</div>
<div class="t" style="left:849.7px;top:319.3px;font-size:11.5px;line-height:11.5px;font-weight:700;color:#000;font-family:'Liberation Sans';transform:scaleX(0.912);">Packages</div>
<div class="t" style="left:915.5px;top:319.3px;font-size:11.5px;line-height:11.5px;font-weight:700;color:#000;font-family:'Liberation Sans';transform:scaleX(0.963);">Help</div>
<div class="t" style="left:958.0px;top:319.3px;font-size:11.5px;line-height:11.5px;font-weight:700;color:#000;font-family:'Liberation Sans';transform:scaleX(0.946);">Viewer</div>
<div class="t r" style="left:846.0px;top:343.3px;font-size:11.5px;line-height:11.5px;font-weight:400;color:#b4b4b4;font-family:'Liberation Sans';transform:scaleX(0.966);">Zoom</div>
<div class="t r" style="left:910.6px;top:343.3px;font-size:11.5px;line-height:11.5px;font-weight:400;color:#000;font-family:'Liberation Sans';">Export</div>
</body></html>
